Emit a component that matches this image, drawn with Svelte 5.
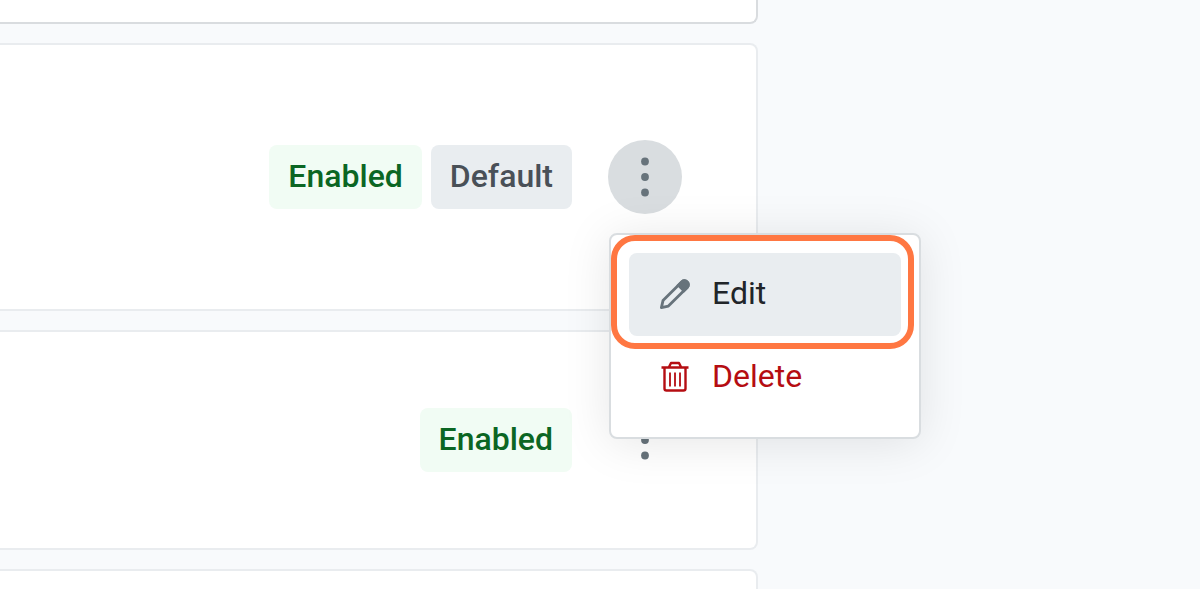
<script lang="ts">
	type Row = {
		id: string;
		badges: { label: string; tone: 'success' | 'neutral' }[];
		tall?: boolean;
	};

	const rows: Row[] = [
		{
			id: 'first',
			tall: true,
			badges: [
				{ label: 'Enabled', tone: 'success' },
				{ label: 'Default', tone: 'neutral' }
			]
		},
		{ id: 'second', badges: [{ label: 'Enabled', tone: 'success' }] }
	];

	let openId = $state<string | null>('first');

	function toggle(id: string) {
		openId = openId === id ? null : id;
	}
</script>

<main class="page">
	<div class="list">
		<div class="card card-head"></div>

		{#each rows as row (row.id)}
			<div class="card row" class:tall={row.tall}>
				<div class="badges">
					{#each row.badges as badge}
						<span class="badge {badge.tone}">{badge.label}</span>
					{/each}
				</div>
				<div class="actions">
					<button
						class="kebab"
						class:open={openId === row.id}
						aria-label="More actions"
						aria-haspopup="menu"
						aria-expanded={openId === row.id}
						onclick={() => toggle(row.id)}
					>
						<svg width="10" height="40" viewBox="0 0 10 40" fill="currentColor">
							<circle cx="5" cy="4.5" r="3.9" />
							<circle cx="5" cy="20" r="3.9" />
							<circle cx="5" cy="35.5" r="3.9" />
						</svg>
					</button>

					{#if openId === row.id}
						<div class="menu" role="menu">
							<button class="menu-item active" role="menuitem">
								<svg width="32" height="32" viewBox="0 0 32 32">
									<path
										d="M2.4 29.6 4 22.6 22.9 3.7a3.9 3.9 0 0 1 5.5 5.5L9.4 28.1Z"
										fill="none"
										stroke="currentColor"
										stroke-width="2.8"
										stroke-linejoin="round"
									/>
									<path
										d="M19.4 7.2 22.9 3.7a3.9 3.9 0 0 1 5.5 5.5L24.9 12.7Z"
										fill="currentColor"
										stroke="currentColor"
										stroke-width="2.8"
									/>
								</svg>
								<span>Edit</span>
							</button>
							<button class="menu-item danger" role="menuitem">
								<svg
									width="32"
									height="32"
									viewBox="0 0 32 32"
									fill="none"
									stroke="currentColor"
									stroke-width="2.4"
									stroke-linejoin="round"
								>
									<path d="M2.500 6.500h27M10 6 12 2h8L22 6" />
									<path d="M5.500 7v20.500a2 2 0 0 0 2 2h17a2 2 0 0 0 2-2V7" />
									<path d="M11 11.500v14M16 11.500v14M21 11.500v14" stroke-width="1.8" />
								</svg>
								<span>Delete</span>
							</button>
							<div class="highlight"></div>
						</div>
					{/if}
				</div>
			</div>
		{/each}

		<div class="card card-next"></div>
	</div>
</main>

<style>
	:global(body) {
		background: #f8fafc;
	}

	.page {
		height: 100vh;
		overflow: hidden;
		font-family: Roboto, 'Liberation Sans', sans-serif;
		background: #f8fafc;
	}

	.list {
		display: flex;
		flex-direction: column;
		gap: 19px;
		margin-right: 442px;
	}

	.card {
		background: #fff;
		border: 2px solid #e9ecef;
		border-left: none;
		border-radius: 0 8px 8px 0;
	}

	.card-head {
		height: 22px;
		border-top: none;
		border-color: #d9dcdf;
		border-radius: 0 0 8px 0;
	}

	.card-next {
		height: 216px;
	}

	.row {
		display: flex;
		align-items: center;
		justify-content: flex-end;
		gap: 36px;
		padding: 71px 74px 71px 0;
	}

	.row.tall {
		padding-top: 95px;
		padding-bottom: 95px;
	}

	.badges {
		display: flex;
		gap: 9px;
	}

	.badge {
		padding: 0 19px 2px;
		border-radius: 8px;
		font-size: 32px;
		font-weight: 500;
		line-height: 62px;
	}

	.badge.success {
		background: #f1fcf4;
		color: #0b6623;
	}

	.badge.neutral {
		background: #e9edf0;
		color: #495057;
	}

	.actions {
		position: relative;
		display: flex;
	}

	.kebab {
		display: flex;
		align-items: center;
		justify-content: center;
		width: 74px;
		height: 74px;
		padding: 0;
		border: none;
		border-radius: 50%;
		background: transparent;
		color: #67737b;
		cursor: pointer;
	}

	.kebab.open {
		background: #d9dde0;
	}

	.menu {
		position: absolute;
		z-index: 10;
		top: calc(100% + 19px);
		left: 1px;
		box-sizing: border-box;
		width: 312px;
		padding: 18px;
		background: #fff;
		border: 2px solid #d9dde0;
		border-radius: 8px;
		box-shadow: 0 4px 48px rgba(0, 0, 0, 0.1);
	}

	.menu-item {
		display: flex;
		align-items: center;
		gap: 21px;
		width: 100%;
		height: 83px;
		padding: 0 30px 2px;
		border: none;
		border-radius: 8px;
		background: transparent;
		color: #212529;
		font-family: inherit;
		font-size: 32px;
		line-height: 40px;
		text-align: left;
		cursor: pointer;
	}

	.menu-item span {
		padding-bottom: 2px;
	}

	.menu-item.active {
		background: #e9edf0;
	}

	.menu-item.active svg {
		color: #67737b;
	}

	.menu-item.danger {
		color: #b50d12;
	}

	.highlight {
		position: absolute;
		top: 0;
		left: 0;
		right: 5px;
		box-sizing: border-box;
		height: 114px;
		border: 6px solid #ff7742;
		border-radius: 24px;
		pointer-events: none;
	}
</style>
